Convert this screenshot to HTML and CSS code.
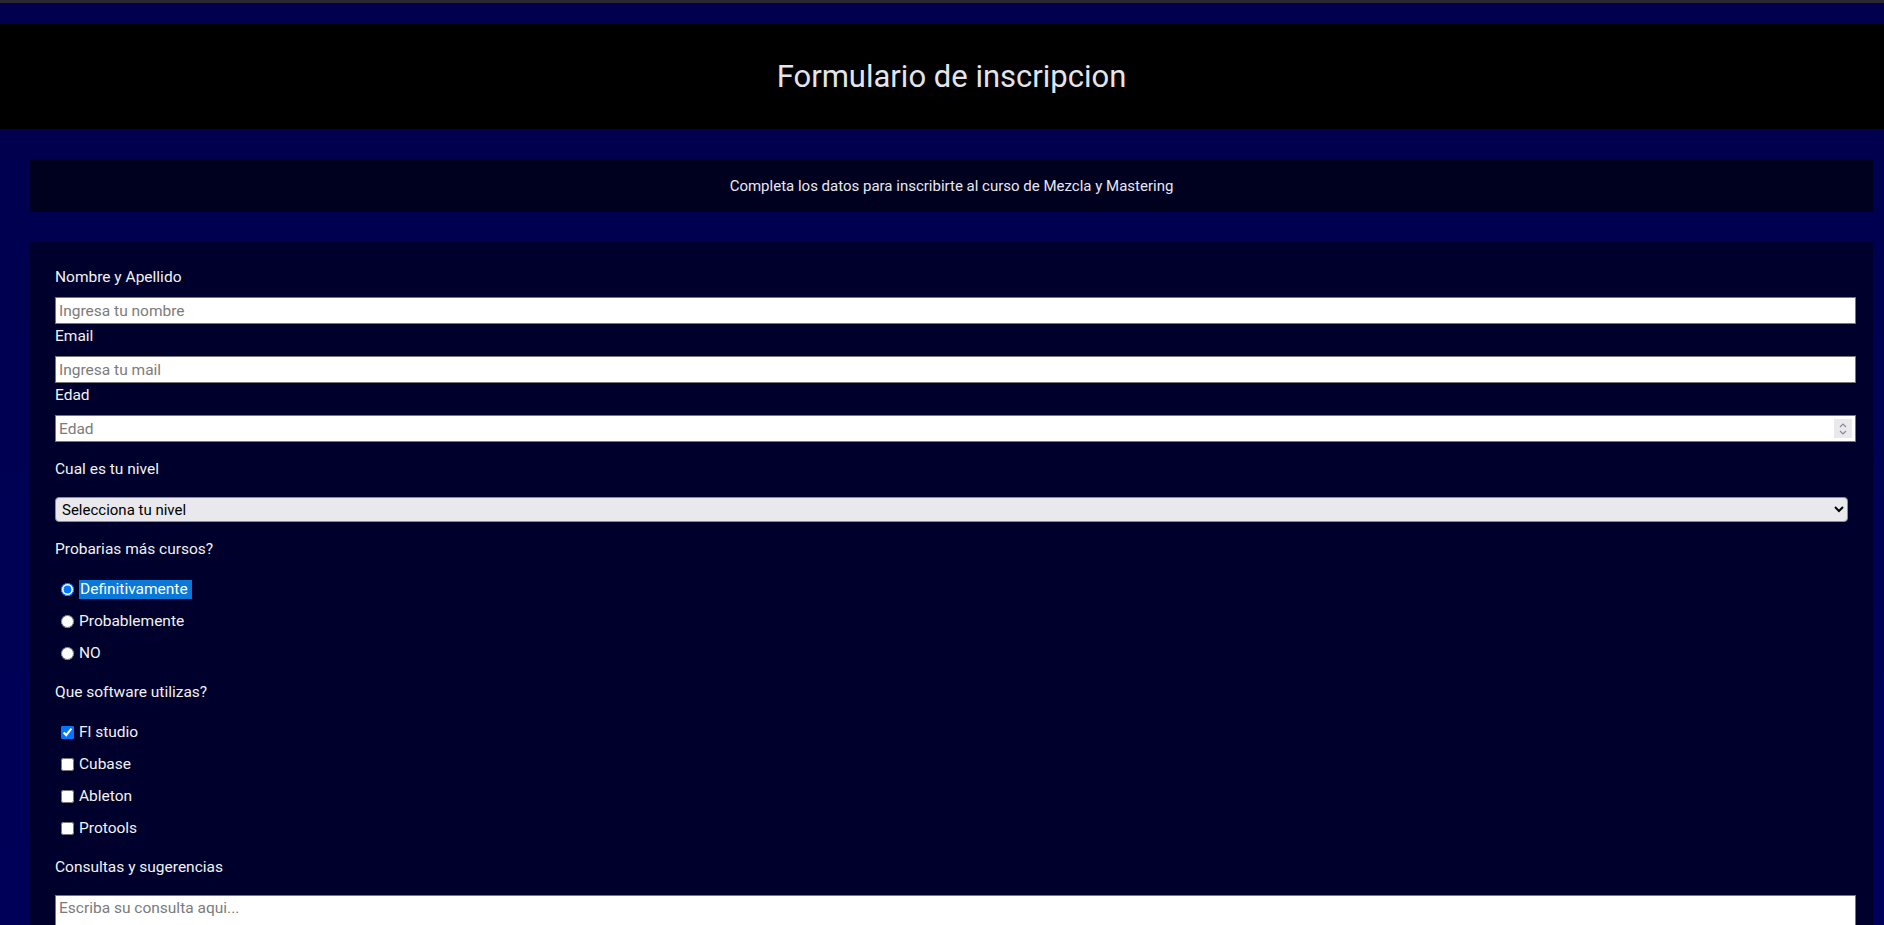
FILE: index.html
```html
<!DOCTYPE html>
<html lang="es">
<head>
<meta charset="utf-8">
<title>Formulario de inscripcion</title>
<link rel="stylesheet" href="styles.css">
</head>
<body>
<div class="topline"></div>
<header class="header">
  <h1 class="title">Formulario de inscripcion</h1>
</header>
<main class="main">
  <section class="intro">
    <p class="intro-text">Completa los datos para inscribirte al curso de Mezcla y Mastering</p>
  </section>
  <form class="form">
    <label class="field-label" for="nombre">Nombre y Apellido</label>
    <input class="text-input" id="nombre" type="text" placeholder="Ingresa tu nombre">
    <label class="field-label" for="email">Email</label>
    <input class="text-input" id="email" type="email" placeholder="Ingresa tu mail">
    <label class="field-label" for="edad">Edad</label>
    <div class="number-wrap">
      <input class="text-input number-input" id="edad" type="number" placeholder="Edad">
      <span class="spinner" aria-hidden="true">
        <svg width="10" height="14" viewBox="0 0 10 14"><path d="M2 5 L5 2 L8 5" fill="none" stroke="#8a8a90" stroke-width="1.2"/><path d="M2 9 L5 12 L8 9" fill="none" stroke="#8a8a90" stroke-width="1.2"/></svg>
      </span>
    </div>

    <p class="question">Cual es tu nivel</p>
    <select class="select">
      <option>Selecciona tu nivel</option>
      <option>Principiante</option>
      <option>Intermedio</option>
      <option>Avanzado</option>
    </select>

    <p class="question">Probarias más cursos?</p>
    <div class="option"><input class="radio" type="radio" name="mas" id="r1" checked><label for="r1"><span class="selected">Definitivamente&nbsp;</span></label></div>
    <div class="option"><input class="radio" type="radio" name="mas" id="r2"><label for="r2">Probablemente</label></div>
    <div class="option"><input class="radio" type="radio" name="mas" id="r3"><label for="r3">NO</label></div>

    <p class="question">Que software utilizas?</p>
    <div class="option"><input class="check" type="checkbox" id="c1" checked><label for="c1">Fl studio</label></div>
    <div class="option"><input class="check" type="checkbox" id="c2"><label for="c2">Cubase</label></div>
    <div class="option"><input class="check" type="checkbox" id="c3"><label for="c3">Ableton</label></div>
    <div class="option"><input class="check" type="checkbox" id="c4"><label for="c4">Protools</label></div>

    <p class="question">Consultas y sugerencias</p>
    <textarea class="textarea" placeholder="Escriba su consulta aqui..."></textarea>
  </form>
</main>
</body>
</html>
```
FILE: styles.css
```css
html, body {
  margin: 0;
  padding: 0;
}

body {
  background: linear-gradient(to bottom, #00004e 0%, #00005a 100%);
  font-family: Roboto, "Noto Sans", Arial, sans-serif;
  color: #f2f2f2;
  font-size: 16px;
  min-height: 925px;
}

.topline {
  height: 3px;
  background: #2a2930;
  margin-bottom: 21px;
}

.header {
  background: #000000;
  height: 105px;
  display: flex;
  align-items: center;
  justify-content: center;
  padding: 0 11px 0 30px;
}

.title {
  margin: 0;
  font-size: 31px;
  font-weight: 400;
  color: #e4e4ea;
}

.main {
  padding: 30px 11px 0 30px;
  display: flex;
  flex-direction: column;
  gap: 30px;
}

.intro {
  background: #00001f;
  height: 53px;
  display: flex;
  align-items: center;
  justify-content: center;
}

.intro-text {
  margin: 0;
  font-size: 15px;
  color: #e8e8f0;
}

.form {
  background: #00002c;
  padding: 23px 25px 40px 25px;
  display: flex;
  flex-direction: column;
  align-items: flex-start;
}

.field-label {
  display: block;
  line-height: 24px;
  margin-bottom: 8px;
  font-size: 15.5px;
}

.text-input {
  box-sizing: content-box;
  width: 100%;
  margin: 0;
  height: 19px;
  border: 1px solid #767676;
  padding: 3px 3px;
  background: #ffffff;
  font-family: Roboto, "Noto Sans", Arial, sans-serif;
  font-size: 15.5px;
  color: #111;
}

.text-input::placeholder {
  color: #7b7b7b;
}

.number-wrap {
  position: relative;
  width: 100%;
}

.number-input {
  display: block;
}

.number-input::-webkit-inner-spin-button,
.number-input::-webkit-outer-spin-button {
  -webkit-appearance: none;
  margin: 0;
}

.spinner {
  position: absolute;
  top: 4px;
  right: -4px;
  width: 18px;
  height: 19px;
  background: #e9e9ed;
  display: flex;
  align-items: center;
  justify-content: center;
}

.question {
  margin: 15px 0 16px;
  line-height: 24px;
  font-size: 15.5px;
}

.select {
  box-sizing: border-box;
  width: 100%;
  height: 25px;
  margin: 0;
  background-color: #e9e9ed;
  border: 1px solid #8d8d95;
  border-radius: 4px;
  font-family: Roboto, "Noto Sans", Arial, sans-serif;
  font-size: 15px;
  color: #000;
  padding: 0 2px;
}

.option {
  display: flex;
  align-items: center;
  height: 24px;
  margin-bottom: 8px;
  font-size: 15.5px;
}

.option:has(+ .question) {
  margin-bottom: 0;
}

.radio,
.check {
  width: 13px;
  height: 13px;
  margin: 0 5px 0 6px;
}

.selected {
  background: #0a78d8;
  color: #ffffff;
  padding: 0 1px;
  line-height: 19px;
  display: inline-block;
}

.textarea {
  box-sizing: content-box;
  width: 100%;
  height: 80px;
  margin: 0;
  border: 1px solid #767676;
  padding: 3px 3px;
  background: #fff;
  font-family: Roboto, "Noto Sans", Arial, sans-serif;
  font-size: 15.5px;
  resize: vertical;
}

.textarea::placeholder {
  color: #7b7b7b;
}
```
